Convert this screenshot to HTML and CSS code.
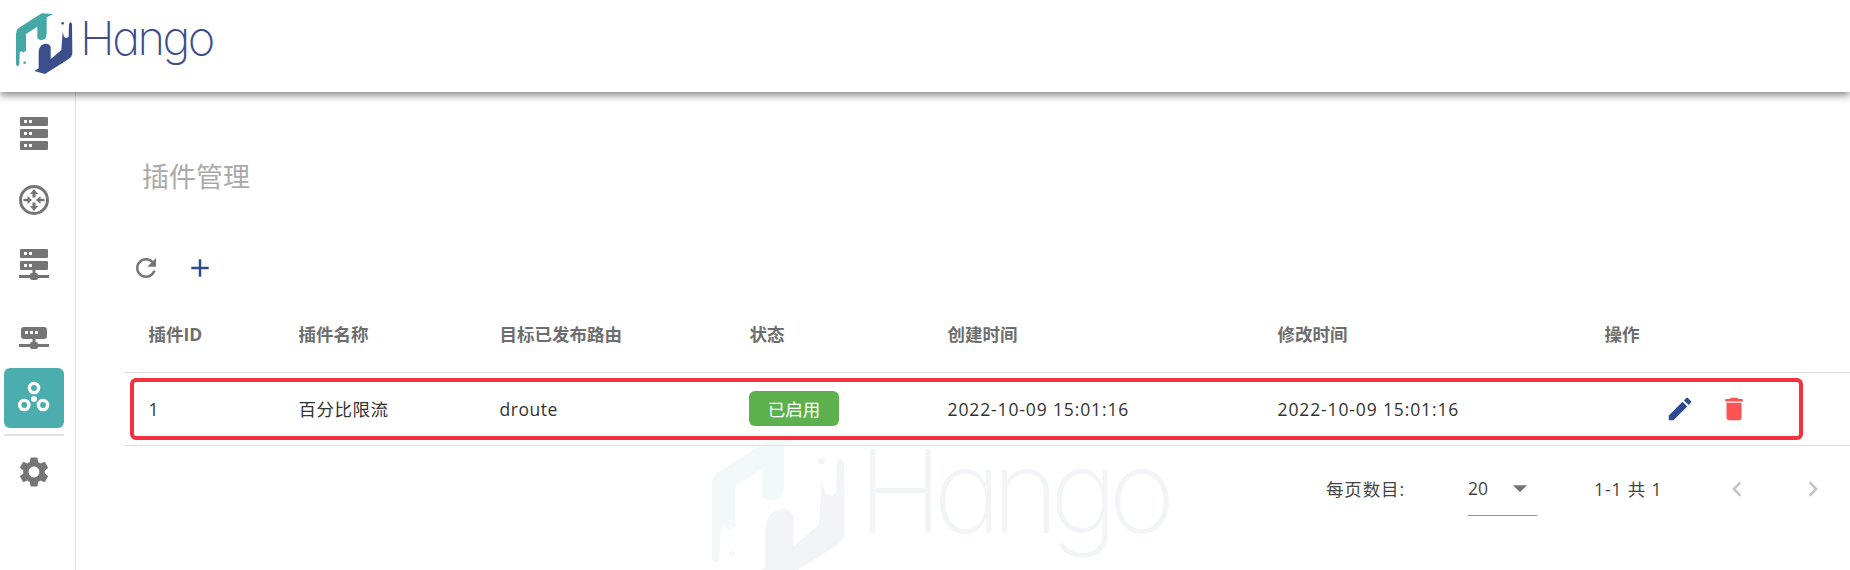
FILE: index.html
```html
<!DOCTYPE html>
<html lang="en">
<head>
    <meta charset="UTF-8">
    <meta name="viewport" content="width=device-width, initial-scale=1.0">
    <title>Hango</title>
    <link rel="stylesheet" href="styles.css">
</head>
<body>
    <svg class="defs" width="0" height="0">
        <symbol id="logo" viewBox="0 0 240 240">
            <path fill="#45a8a6" d="M160 42L125 40L56 84Q48 90 48 100L48 192Q48 198 53 198Q58 198 58 192L59 158Q64 150 69 158L78 152L78 102L112 80L112 115Q120 124 134 118Q140 112 140 100L140 52Z"/>
            <circle fill="#45a8a6" cx="74" cy="188" r="4"/>
            <path fill="#3a4f8c" d="M103 213L135 222L205 178Q217 170 217 160L216 72Q212 62 207 72L206 110Q198 118 192 110L188 95L184 150L152 178L152 140Q145 125 125 135Q117 142 116 155L116 205Z"/>
            <circle fill="#3a4f8c" cx="188" cy="70" r="4"/>
        </symbol>
    </svg>

    <header class="topbar">
        <svg class="logo"><use href="#logo"/></svg>
        <span class="wordmark">Hango</span>
    </header>

    <div class="layout">
        <nav class="sidebar">
            <a class="nav-item">
                <svg width="36" height="36" viewBox="0 0 36 36">
                    <g fill="#757575">
                        <rect x="4" y="1" width="28" height="9" rx="1"/>
                        <rect x="4" y="13" width="28" height="9" rx="1"/>
                        <rect x="4" y="25" width="28" height="9" rx="1"/>
                    </g>
                    <g fill="#fff">
                        <rect x="8" y="4" width="3" height="3"/><rect x="13" y="4" width="3" height="3"/>
                        <rect x="8" y="16" width="3" height="3"/><rect x="13" y="16" width="3" height="3"/>
                        <rect x="8" y="28" width="3" height="3"/><rect x="13" y="28" width="3" height="3"/>
                    </g>
                </svg>
            </a>
            <a class="nav-item">
                <svg width="36" height="36" viewBox="0 0 36 36">
                    <circle cx="18" cy="18" r="13.5" fill="none" stroke="#757575" stroke-width="3"/>
                    <path fill="#757575" d="M18 7L22 12H19.5V15.5H16.5V12H14ZM18 29L14 24H16.5V20.5H19.5V24H22ZM16 18L11.5 22V19.3H7.5V16.7H11.5V14ZM20 18L24.5 14V16.7H28.5V19.3H24.5V22Z"/>
                </svg>
            </a>
            <a class="nav-item">
                <svg width="36" height="36" viewBox="0 0 36 36">
                    <g fill="#757575">
                        <rect x="4" y="1" width="28" height="9" rx="1"/>
                        <rect x="4" y="13" width="28" height="9" rx="1"/>
                        <rect x="16.5" y="22" width="3" height="8"/>
                        <rect x="3" y="27" width="30" height="3"/>
                        <rect x="14" y="25" width="8" height="7" rx="2"/>
                    </g>
                    <g fill="#fff">
                        <rect x="8" y="4" width="3" height="3"/><rect x="13" y="4" width="3" height="3"/>
                        <rect x="8" y="16" width="3" height="3"/><rect x="13" y="16" width="3" height="3"/>
                    </g>
                </svg>
            </a>
            <a class="nav-item gateway">
                <svg width="36" height="36" viewBox="0 0 36 36">
                    <g fill="#757575">
                        <rect x="5" y="8" width="26" height="12" rx="3"/>
                        <rect x="16.5" y="20" width="3" height="8"/>
                        <rect x="3" y="25" width="30" height="3"/>
                        <rect x="14" y="23" width="8" height="7" rx="2"/>
                    </g>
                    <g fill="#fff">
                        <rect x="9" y="12" width="3" height="3"/><rect x="14" y="12" width="3" height="3"/><rect x="19" y="12" width="3" height="3"/>
                    </g>
                </svg>
            </a>
            <a class="nav-item active">
                <svg width="36" height="36" viewBox="0 0 36 36">
                    <g fill="none" stroke="#fff" stroke-width="3.4">
                        <circle cx="18" cy="8" r="4.6"/>
                        <circle cx="8.3" cy="25" r="4.6"/>
                        <circle cx="27" cy="25" r="4.6"/>
                    </g>
                    <circle cx="18" cy="19" r="3" fill="#fff"/>
                </svg>
            </a>
            <div class="nav-divider"></div>
            <a class="nav-item gear">
                <svg width="36" height="36" viewBox="0 0 24 24">
                    <path fill="#757575" d="M19.14,12.94c0.04-0.3,0.06-0.61,0.06-0.94c0-0.32-0.02-0.64-0.07-0.94l2.03-1.58c0.18-0.14,0.23-0.41,0.12-0.61 l-1.92-3.32c-0.12-0.22-0.37-0.29-0.59-0.22l-2.39,0.96c-0.5-0.38-1.03-0.7-1.62-0.94L14.4,2.81c-0.04-0.24-0.24-0.41-0.48-0.41 h-3.84c-0.24,0-0.43,0.17-0.47,0.41L9.25,5.35C8.66,5.59,8.12,5.92,7.63,6.29L5.24,5.33c-0.22-0.08-0.47,0-0.59,0.22L2.74,8.87 C2.62,9.08,2.66,9.34,2.86,9.48l2.03,1.58C4.84,11.36,4.8,11.69,4.8,12s0.02,0.64,0.07,0.94l-2.03,1.58 c-0.18,0.14-0.23,0.41-0.12,0.61l1.92,3.32c0.12,0.22,0.37,0.29,0.59,0.22l2.39-0.96c0.5,0.38,1.03,0.7,1.62,0.94l0.36,2.54 c0.05,0.24,0.24,0.41,0.48,0.41h3.84c0.24,0,0.44-0.17,0.47-0.41l0.36-2.54c0.59-0.24,1.13-0.56,1.62-0.94l2.39,0.96 c0.22,0.08,0.47,0,0.59-0.22l1.92-3.32c0.12-0.22,0.07-0.47-0.12-0.61L19.14,12.94z M12,15.6c-1.98,0-3.6-1.62-3.6-3.6 s1.62-3.6,3.6-3.6s3.6,1.62,3.6,3.6S13.98,15.6,12,15.6z"/>
                </svg>
            </a>
        </nav>

        <main class="content">
            <div class="watermark">
                <svg class="watermark-logo"><use href="#logo"/></svg>
                <span class="watermark-text">Hango</span>
            </div>

            <h1 class="page-title">插件管理</h1>

            <div class="toolbar">
                <button class="icon-btn">
                    <svg width="30" height="30" viewBox="0 0 24 24"><path fill="#757575" d="M17.65 6.35C16.2 4.9 14.21 4 12 4c-4.42 0-7.99 3.58-7.99 8s3.57 8 7.99 8c3.73 0 6.84-2.55 7.73-6h-2.08c-.82 2.33-3.04 4-5.65 4-3.31 0-6-2.69-6-6s2.69-6 6-6c1.66 0 3.14.69 4.22 1.78L13 11h7V4l-2.35 2.35z"/></svg>
                </button>
                <button class="icon-btn">
                    <svg width="30" height="30" viewBox="0 0 24 24"><path fill="#2f4b8f" d="M19 13h-6v6h-2v-6H5v-2h6V5h2v6h6v2z"/></svg>
                </button>
            </div>

            <div class="table-wrap">
                <table class="plugin-table">
                    <colgroup>
                        <col class="col-id"><col class="col-name"><col class="col-route"><col class="col-status">
                        <col class="col-created"><col class="col-updated"><col class="col-actions">
                    </colgroup>
                    <thead>
                        <tr>
                            <th>插件ID</th>
                            <th>插件名称</th>
                            <th>目标已发布路由</th>
                            <th>状态</th>
                            <th>创建时间</th>
                            <th>修改时间</th>
                            <th>操作</th>
                        </tr>
                    </thead>
                    <tbody>
                        <tr>
                            <td>1</td>
                            <td>百分比限流</td>
                            <td>droute</td>
                            <td><span class="chip">已启用</span></td>
                            <td class="date">2022-10-09 15:01:16</td>
                            <td class="date">2022-10-09 15:01:16</td>
                            <td>
                                <div class="row-actions">
                                    <svg width="30" height="30" viewBox="0 0 24 24"><path fill="#2f4b8f" d="M3 17.25V21h3.75L17.81 9.94l-3.75-3.75L3 17.25zM20.71 7.04c.39-.39.39-1.02 0-1.41l-2.34-2.34c-.39-.39-1.02-.39-1.41 0l-1.83 1.83 3.75 3.75 1.83-1.83z"/></svg>
                                    <svg width="30" height="30" viewBox="0 0 24 24"><path fill="#ff5252" d="M6 19c0 1.1.9 2 2 2h8c1.1 0 2-.9 2-2V7H6v12zM19 4h-3.5l-1-1h-5l-1 1H5v2h14V4z"/></svg>
                                </div>
                            </td>
                        </tr>
                    </tbody>
                </table>
                <div class="highlight"></div>
            </div>

            <div class="pagination">
                <span class="per-page">每页数目:</span>
                <div class="per-select">
                    <span>20</span>
                    <svg width="34" height="34" viewBox="0 0 24 24"><path fill="#757575" d="M7 10l5 5 5-5z"/></svg>
                </div>
                <span class="page-range">1-1 共 1</span>
                <svg class="page-arrow" width="30" height="30" viewBox="0 0 24 24"><path fill="#c4c4c4" d="M15.41 7.41L14 6l-6 6 6 6 1.41-1.41L10.83 12z"/></svg>
                <svg class="page-arrow next" width="30" height="30" viewBox="0 0 24 24"><path fill="#c4c4c4" d="M10 6L8.59 7.41 13.17 12l-4.58 4.59L10 18l6-6z"/></svg>
            </div>
        </main>
    </div>
</body>
</html>
```

FILE: styles.css
```css
html, body {
    margin: 0;
    height: 570px;
    overflow: hidden;
    background: #fff;
}
body {
    font-family: "Open Sans", "Noto Sans CJK SC", sans-serif;
    font-size: 17.5px;
    color: #333;
}
.defs {
    position: absolute;
}
.topbar {
    position: relative;
    z-index: 2;
    height: 92px;
    display: flex;
    background: #fff;
    box-shadow: 0 3px 8px rgba(0, 0, 0, 0.5);
}
.logo {
    width: 80px;
    height: 80px;
}
.wordmark {
    margin: 8px 0 0 0;
    font-family: Inter, sans-serif;
    font-feature-settings: "cv11";
    font-weight: 200;
    font-size: 47px;
    line-height: 60px;
    letter-spacing: -2.5px;
    color: #3a4f8c;
}
.layout {
    display: flex;
    height: 478px;
}
.sidebar {
    flex: none;
    box-sizing: border-box;
    padding: 24px 11px 0 4px;
    border-right: 1px solid #e0e0e0;
    width: 76px;
    display: flex;
    flex-direction: column;
    align-items: stretch;
}
.nav-item {
    height: 36px;
    margin-bottom: 30px;
    display: flex;
    justify-content: center;
    align-items: center;
    flex: none;
}
.nav-item.gateway {
    margin-top: 5px;
    margin-bottom: 13px;
}
.nav-item.active {
    height: 60px;
    margin: 0 0 6px;
    border-radius: 6px;
    background: #4cadaf;
}
.nav-divider {
    height: 2px;
    background: #e0e0e0;
}
.nav-item.gear {
    margin-top: 18px;
}
.content {
    position: relative;
    flex: 1;
    padding-left: 48px;
    min-width: 0;
}
.watermark {
    position: absolute;
    left: 598px;
    top: 314px;
    display: flex;
    align-items: flex-start;
    opacity: 0.06;
}
.watermark-logo {
    width: 189px;
    height: 189px;
}
.watermark-text {
    margin: 36px 0 0 -5px;
    font-family: Inter, sans-serif;
    font-feature-settings: "cv11";
    font-weight: 200;
    font-size: 115px;
    line-height: 100px;
    letter-spacing: -9.5px;
    color: #3a4f8c;
}
.page-title {
    margin: 67px 0 51px 18px;
    font-size: 27px;
    font-weight: 400;
    line-height: 36px;
    color: #aaa;
}
.toolbar {
    display: flex;
    gap: 10px;
}
.icon-btn {
    width: 44px;
    height: 44px;
    padding: 0;
    border: none;
    background: none;
    display: flex;
    justify-content: center;
    align-items: center;
}
.table-wrap {
    position: relative;
    margin-top: 8px;
}
.plugin-table {
    width: 1726px;
    table-layout: fixed;
    border-collapse: collapse;
}
.col-id { width: 150px; }
.col-name { width: 201px; }
.col-route { width: 250px; }
.col-status { width: 198px; }
.col-created { width: 330px; }
.col-updated { width: 327px; }
.col-actions { width: 270px; }
.plugin-table th {
    height: 74px;
    padding: 0 0 2px 24.5px;
    box-sizing: border-box;
    text-align: left;
    font-weight: 700;
    color: #6e6e6e;
    border-bottom: 1px solid #e0e0e0;
}
.plugin-table td {
    height: 72px;
    padding: 0 0 0 24.5px;
    border-bottom: 1px solid #e0e0e0;
    white-space: nowrap;
    letter-spacing: 0.03em;
}
.plugin-table td.date {
    letter-spacing: 0.05em;
}
.chip {
    display: inline-flex;
    align-items: center;
    justify-content: center;
    width: 90px;
    height: 35px;
    border-radius: 6px;
    background: #5cb04e;
    color: #fff;
    letter-spacing: 0;
    margin-left: -0.5px;
}
.row-actions {
    display: flex;
    gap: 24px;
    margin-left: 60px;
}
.highlight {
    position: absolute;
    left: 6px;
    top: 80px;
    width: 1673px;
    height: 62px;
    box-sizing: border-box;
    border: 4px solid #f5303f;
    border-radius: 6px;
}
.pagination {
    display: flex;
    align-items: center;
    height: 54px;
    margin-top: 16px;
    color: #444;
}
.per-page {
    margin-left: 1202px;
    width: 142px;
    letter-spacing: 0.05em;
}
.per-select {
    width: 69px;
    height: 54px;
    box-sizing: border-box;
    border-bottom: 1px solid #949494;
    display: flex;
    align-items: center;
    justify-content: space-between;
}
.page-range {
    margin-left: 57px;
    width: 128px;
    letter-spacing: 0.05em;
}
.page-arrow.next {
    margin-left: 46px;
}
```
